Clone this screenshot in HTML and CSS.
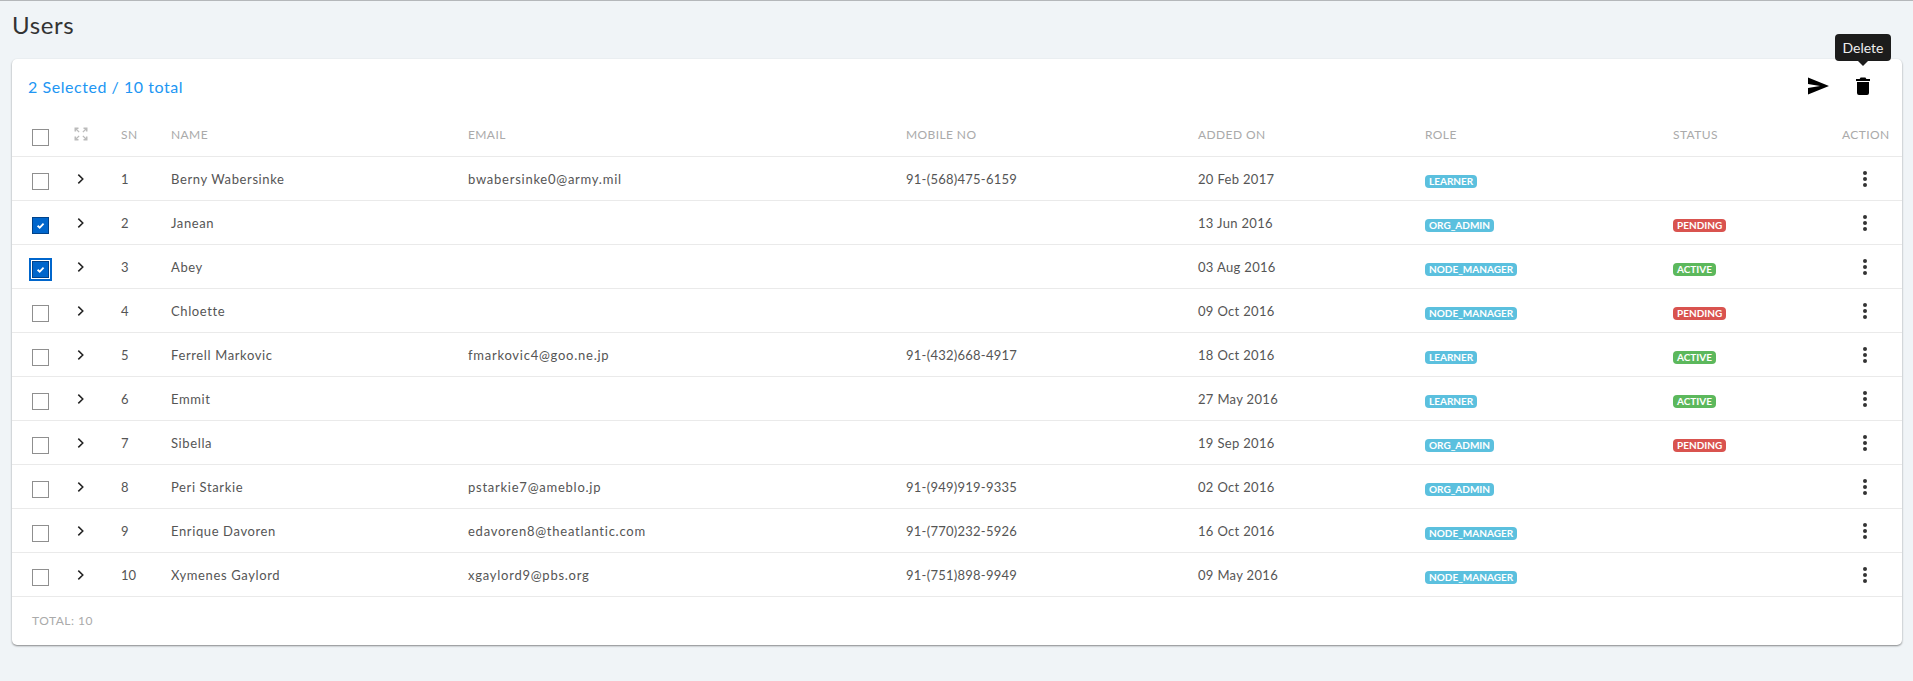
FILE: index.html
```html
<!DOCTYPE html>
<html lang="en">
<head>
<meta charset="utf-8">
<title>Users</title>
<link rel="stylesheet" href="styles.css">
</head>
<body>
<svg class="defs" width="0" height="0" aria-hidden="true">
  <symbol id="chev" viewBox="0 0 14 14"><path d="M4.300 2.600 8.800 7 4.300 11.400" fill="none" stroke="#222" stroke-width="1.500"/></symbol>
  <symbol id="dots" viewBox="0 0 6 18"><circle cx="3" cy="3" r="2"/><circle cx="3" cy="9" r="2"/><circle cx="3" cy="15" r="2"/></symbol>
  <symbol id="tick" viewBox="0 0 17 17"><path d="M5.200 8.800 7.600 11 12 6.400" fill="none" stroke="#fff" stroke-width="2"/></symbol>
</svg>
<h1 class="title">Users</h1>
<section class="card">
  <div class="toolbar">
    <span class="selected">2 Selected / 10 total</span>
    <div class="tools">
      <svg class="send" width="22" height="18" viewBox="0 0 22 18"><path d="M1 0.500 22 9 1 17.500V11L13 9 1 7Z"/></svg>
      <span class="trash-wrap">
        <svg class="trash" width="14" height="18" viewBox="0 0 14 18"><path d="M4.600 0.500h4.800L10.400 2H14v2H0V2h3.600ZM1 5h12v11a2 2 0 0 1-2 2H3a2 2 0 0 1-2-2Z"/></svg>
        <span class="tooltip">Delete</span>
      </span>
    </div>
  </div>
  <div class="row head">
    <span class="box"></span>
    <svg class="expand" width="14" height="14" viewBox="0 0 14 14"><path d="M0.500 0.500h4v1.600H3L5.600 4.700 4.700 5.600 2.100 3v1.500H0.500ZM13.500 0.500v4h-1.600V3L9.300 5.600 8.400 4.700 11 2.100H9.500V0.500ZM0.500 13.500v-4h1.600V11l2.600-2.600.9.900L3 11.900h1.500v1.600ZM13.500 13.500h-4v-1.600H11L8.400 9.300l.9-.9 2.600 2.600V9.500h1.600Z" fill="#bbb"/></svg>
    <span>SN</span><span>NAME</span><span>EMAIL</span><span>MOBILE NO</span><span>ADDED ON</span><span>ROLE</span><span>STATUS</span><span>ACTION</span>
  </div>
  <div class="row"><span class="box"></span><svg class="chev"><use href="#chev"/></svg><span>1</span><span>Berny Wabersinke</span><span>bwabersinke0@army.mil</span><span>91-(568)475-6159</span><span>20 Feb 2017</span><span class="cell"><b class="badge info">LEARNER</b></span><span></span><svg class="dots"><use href="#dots"/></svg></div>
  <div class="row"><span class="box on"><svg class="tick"><use href="#tick"/></svg></span><svg class="chev"><use href="#chev"/></svg><span>2</span><span>Janean</span><span></span><span></span><span>13 Jun 2016</span><span class="cell"><b class="badge info">ORG_ADMIN</b></span><span class="cell"><b class="badge danger">PENDING</b></span><svg class="dots"><use href="#dots"/></svg></div>
  <div class="row"><span class="box on focus"><svg class="tick"><use href="#tick"/></svg></span><svg class="chev"><use href="#chev"/></svg><span>3</span><span>Abey</span><span></span><span></span><span>03 Aug 2016</span><span class="cell"><b class="badge info">NODE_MANAGER</b></span><span class="cell"><b class="badge success">ACTIVE</b></span><svg class="dots"><use href="#dots"/></svg></div>
  <div class="row"><span class="box"></span><svg class="chev"><use href="#chev"/></svg><span>4</span><span>Chloette</span><span></span><span></span><span>09 Oct 2016</span><span class="cell"><b class="badge info">NODE_MANAGER</b></span><span class="cell"><b class="badge danger">PENDING</b></span><svg class="dots"><use href="#dots"/></svg></div>
  <div class="row"><span class="box"></span><svg class="chev"><use href="#chev"/></svg><span>5</span><span>Ferrell Markovic</span><span>fmarkovic4@goo.ne.jp</span><span>91-(432)668-4917</span><span>18 Oct 2016</span><span class="cell"><b class="badge info">LEARNER</b></span><span class="cell"><b class="badge success">ACTIVE</b></span><svg class="dots"><use href="#dots"/></svg></div>
  <div class="row"><span class="box"></span><svg class="chev"><use href="#chev"/></svg><span>6</span><span>Emmit</span><span></span><span></span><span>27 May 2016</span><span class="cell"><b class="badge info">LEARNER</b></span><span class="cell"><b class="badge success">ACTIVE</b></span><svg class="dots"><use href="#dots"/></svg></div>
  <div class="row"><span class="box"></span><svg class="chev"><use href="#chev"/></svg><span>7</span><span>Sibella</span><span></span><span></span><span>19 Sep 2016</span><span class="cell"><b class="badge info">ORG_ADMIN</b></span><span class="cell"><b class="badge danger">PENDING</b></span><svg class="dots"><use href="#dots"/></svg></div>
  <div class="row"><span class="box"></span><svg class="chev"><use href="#chev"/></svg><span>8</span><span>Peri Starkie</span><span>pstarkie7@ameblo.jp</span><span>91-(949)919-9335</span><span>02 Oct 2016</span><span class="cell"><b class="badge info">ORG_ADMIN</b></span><span></span><svg class="dots"><use href="#dots"/></svg></div>
  <div class="row"><span class="box"></span><svg class="chev"><use href="#chev"/></svg><span>9</span><span>Enrique Davoren</span><span>edavoren8@theatlantic.com</span><span>91-(770)232-5926</span><span>16 Oct 2016</span><span class="cell"><b class="badge info">NODE_MANAGER</b></span><span></span><svg class="dots"><use href="#dots"/></svg></div>
  <div class="row"><span class="box"></span><svg class="chev"><use href="#chev"/></svg><span>10</span><span>Xymenes Gaylord</span><span>xgaylord9@pbs.org</span><span>91-(751)898-9949</span><span>09 May 2016</span><span class="cell"><b class="badge info">NODE_MANAGER</b></span><span></span><svg class="dots"><use href="#dots"/></svg></div>
  <div class="total">TOTAL: 10</div>
</section>
</body>
</html>
```
FILE: styles.css
```css
* { box-sizing: border-box; }
html, body { height: 100%; }
body {
  margin: 0;
  background: #f0f4f7;
  border-top: 1px solid #b4b7ba;
  font-family: Lato, "Noto Sans", sans-serif;
  color: #555;
  overflow: hidden;
}
.defs { position: absolute; }
.title {
  margin: 0;
  padding: 9px 0 0 12px;
  height: 58px;
  font-size: 24px;
  line-height: 30px;
  font-weight: 400;
  letter-spacing: .6px;
  color: #333;
}
.card {
  margin: 0 11px 0 12px;
  height: 586px;
  background: #fff;
  border-radius: 5px;
  box-shadow: 0 1px 2px rgba(0, 0, 0, .45);
}
.toolbar {
  height: 54px;
  padding: 0 32px 0 16px;
  display: flex;
  align-items: center;
  justify-content: space-between;
}
.selected { font-size: 16px; letter-spacing: .55px; color: #2196f3; }
.tools { display: flex; align-items: center; gap: 27px; }
.send, .trash { display: block; }
.trash-wrap { position: relative; display: block; }
.tooltip {
  position: absolute;
  left: -21px;
  top: -43px;
  width: 56px;
  height: 27px;
  line-height: 27px;
  text-align: center;
  font-size: 14px;
  color: #eee;
  background: #1c1c1c;
  border-radius: 4px;
}
.tooltip::after {
  content: "";
  position: absolute;
  left: 23px;
  top: 27px;
  border: 5px solid transparent;
  border-bottom-width: 0;
  border-top-color: #1c1c1c;
}
.row {
  display: grid;
  grid-template-columns: 42px 47px 50px 297px 438px 292px 227px 248px 169px 46px;
  align-items: center;
  height: 44px;
  padding-left: 20px;
  border-bottom: 1px solid #eaeaea;
  font-size: 13px;
}
.row > :nth-child(4) { letter-spacing: .62px; }
.row > :nth-child(5) { letter-spacing: .75px; }
.row > :nth-child(6) { letter-spacing: .25px; }
.row > :nth-child(7) { letter-spacing: .33px; }
.row.head > span { letter-spacing: .4px; }
.head { color: #aaa; font-size: 12px; }
.box {
  display: block;
  width: 17px;
  height: 17px;
  margin-top: 5px;
  border: 1px solid #8f8f8f;
  background: #fff;
}
.box.on { background: #0066cc; border-color: #00428a; }
.box.focus { outline: 2px solid #0066cc; outline-offset: 1px; }
.tick { display: block; width: 15px; height: 15px; }
.expand { display: block; margin-bottom: 1px; }
.chev { display: block; width: 14px; height: 14px; }
.dots { display: block; width: 6px; height: 18px; margin-left: 20px; fill: #333; }
.cell { display: block; margin-top: 5px; line-height: 13px; height: 13px; }
.badge {
  display: inline-block;
  height: 13px;
  padding: 0 4px;
  border-radius: 4px;
  font-size: 10px;
  font-weight: 700;
  line-height: 13px;
  color: #fff;
  vertical-align: top;
}
.info { background: #5bc0de; }
.danger { background: #d9534f; }
.success { background: #5cb85c; }
.total { padding: 16px 0 0 20px; font-size: 12px; letter-spacing: .5px; color: #aaa; }
```
